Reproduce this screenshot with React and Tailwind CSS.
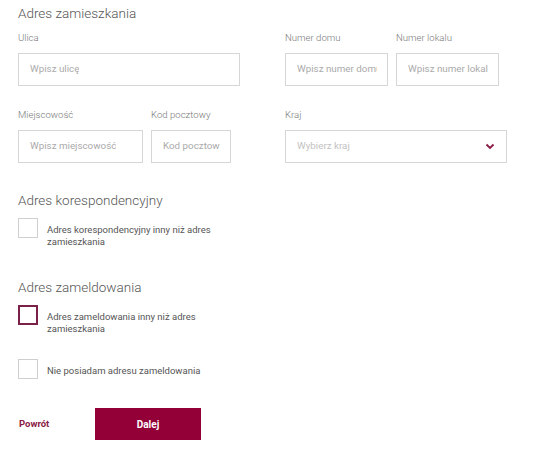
import React from "react";

const font = { fontFamily: "Roboto, 'Liberation Sans', sans-serif" };

function Field({ label, placeholder, w }) {
  return (
    <div className={`flex flex-col ${w}`}>
      <div className="h-[16px] text-[9.6px] leading-[16px] text-[#777] font-light">{label}</div>
      <div className="mt-[7px] h-[33px] border border-[#d6d6d6] flex items-center pl-[11px] pr-[10px]">
        <div className="overflow-hidden whitespace-nowrap text-[9.8px] text-[#aaa]">{placeholder}</div>
      </div>
    </div>
  );
}

function Check({ active, children }) {
  return (
    <div className="flex items-start">
      <div
        className={`w-[20px] h-[20px] shrink-0 ${
          active ? "border-2 border-[#7b2149]" : "border border-[#cfcfcf]"
        }`}
      />
      <div className="ml-[9px] mt-[6px] text-[9.5px] leading-[12px] text-[#555] w-[180px]">{children}</div>
    </div>
  );
}

export default function App() {
  return (
    <div style={font} className="w-[560px] h-[457px] bg-white pl-[18px] pt-[4px]">
      <div className="text-[13.5px] leading-[18px] text-[#555] font-light">Adres zamieszkania</div>
      <div className="flex mt-[8px]">
        <div className="w-[267px] flex flex-col">
          <Field label="Ulica" placeholder="Wpisz ulicę" w="w-[222px]" />
          <div className="flex gap-[8px] mt-[21px]">
            <Field label="Miejscowość" placeholder="Wpisz miejscowość" w="w-[125px]" />
            <Field label="Kod pocztowy" placeholder="Kod pocztowy" w="w-[80px]" />
          </div>
        </div>
        <div className="flex flex-col">
          <div className="flex gap-[8px]">
            <Field label="Numer domu" placeholder="Wpisz numer domu" w="w-[103px]" />
            <Field label="Numer lokalu" placeholder="Wpisz numer lokalu" w="w-[103px]" />
          </div>
          <div className="flex flex-col w-[222px] mt-[21px]">
            <div className="h-[16px] text-[9.6px] leading-[16px] text-[#777] font-light">Kraj</div>
            <div className="mt-[7px] h-[33px] border border-[#d6d6d6] flex items-center justify-between pl-[11px] pr-[11px] text-[9.8px] text-[#c2c2c2]">
              <span>Wybierz kraj</span>
              <svg width="10" height="7" viewBox="0 0 10 7">
                <path d="M1.5 1.5 L5 5 L8.5 1.5" fill="none" stroke="#8a1a45" strokeWidth="1.8" />
              </svg>
            </div>
          </div>
        </div>
      </div>

      <div className="mt-[28px] text-[13.5px] leading-[18px] text-[#555] font-light">Adres korespondencyjny</div>
      <div className="mt-[9px]">
        <Check>Adres korespondencyjny inny niż adres zamieszkania</Check>
      </div>

      <div className="mt-[30px] text-[13.5px] leading-[18px] text-[#555] font-light">Adres zameldowania</div>
      <div className="mt-[9px]">
        <Check active>Adres zameldowania inny niż adres zamieszkania</Check>
      </div>
      <div className="mt-[24px]">
        <Check>
          <span className="whitespace-nowrap">Nie posiadam adresu zameldowania</span>
        </Check>
      </div>

      <div className="flex items-center mt-[29px]">
        <div className="w-[77px] pl-[1px] text-[9.5px] font-bold text-[#8b1a45]">Powrót</div>
        <div className="w-[106px] h-[32px] bg-[#930037] flex items-center justify-center text-white text-[10px] font-bold">
          Dalej
        </div>
      </div>
    </div>
  );
}
